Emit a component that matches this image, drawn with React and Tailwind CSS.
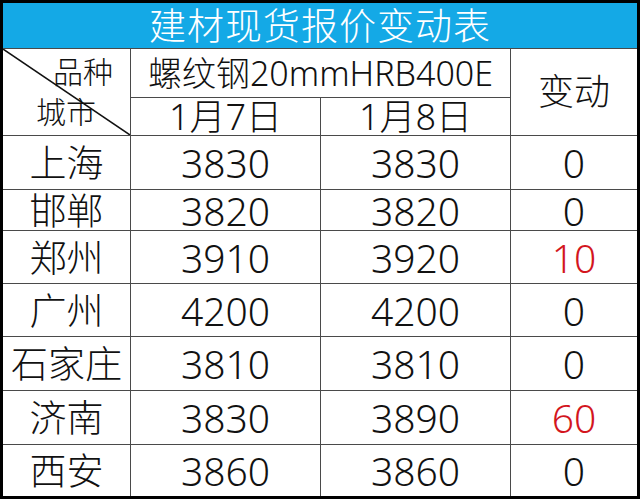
import React from 'react';

const rows = [
  { city: '上海', d7: '3830', d8: '3830', diff: '0', h: 'h-[53px]' },
  { city: '邯郸', d7: '3820', d8: '3820', diff: '0', h: 'h-[40px]' },
  { city: '郑州', d7: '3910', d8: '3920', diff: '10', h: 'h-[52px]' },
  { city: '广州', d7: '4200', d8: '4200', diff: '0', h: 'h-[52px]' },
  { city: '石家庄', d7: '3810', d8: '3810', diff: '0', h: 'h-[53px]' },
  { city: '济南', d7: '3830', d8: '3890', diff: '60', h: 'h-[53px]' },
  { city: '西安', d7: '3860', d8: '3860', diff: '0', h: 'h-[51px]' },
];

const font = { fontFamily: '"Noto Sans", "Noto Sans CJK SC", sans-serif' };

const App = () => {
  return (
    <div className="w-[640px] h-[503px] bg-white font-light" style={font}>
      <div className="w-[640px] h-[499px] border-[3px] border-black">
        <div className="grid grid-cols-[127px_189px_189px_126px] gap-px bg-[#4a4a4a] text-[#111]">
          <div className="col-span-4 h-[45px] bg-[#14a9e6] flex items-center justify-center text-white text-[37px] leading-none tracking-[1px]">
            建材现货报价变动表
          </div>

          <div className="row-span-2 bg-white relative">
            <svg className="absolute inset-0" width="127" height="86" viewBox="0 0 127 86">
              <line x1="0" y1="0" x2="127" y2="86" stroke="#111" strokeWidth="1.5" />
            </svg>
            <div className="flex flex-col pt-[8px]">
              <div className="h-[30px] leading-[30px] text-[30px] text-right pr-[17px]">品种</div>
              <div className="mt-[10px] h-[30px] leading-[30px] text-[30px] pl-[33px]">城市</div>
            </div>
          </div>
          <div className="col-span-2 h-[48px] bg-white flex items-center justify-center text-[34px] leading-none">
            螺纹钢20mmHRB400E
          </div>
          <div className="row-span-2 bg-white flex items-center justify-center text-[36px] leading-none">
            变动
          </div>
          <div className="h-[37px] bg-white flex items-center justify-center text-[36px] leading-none">
            1月7日
          </div>
          <div className="h-[37px] bg-white flex items-center justify-center text-[36px] leading-none">
            1月8日
          </div>

          {rows.map((r) => (
            <React.Fragment key={r.city}>
              <div className={`${r.h} bg-white flex items-center justify-center text-[37px] leading-none`}>
                {r.city}
              </div>
              <div className={`${r.h} bg-white flex items-center justify-center text-[39px] leading-none`}>
                {r.d7}
              </div>
              <div className={`${r.h} bg-white flex items-center justify-center text-[39px] leading-none`}>
                {r.d8}
              </div>
              <div
                className={`${r.h} bg-white flex items-center justify-center text-[39px] leading-none ${
                  r.diff !== '0' ? 'text-[#d3161e]' : ''
                }`}
              >
                {r.diff}
              </div>
            </React.Fragment>
          ))}
        </div>
      </div>
    </div>
  );
};

export default App;
